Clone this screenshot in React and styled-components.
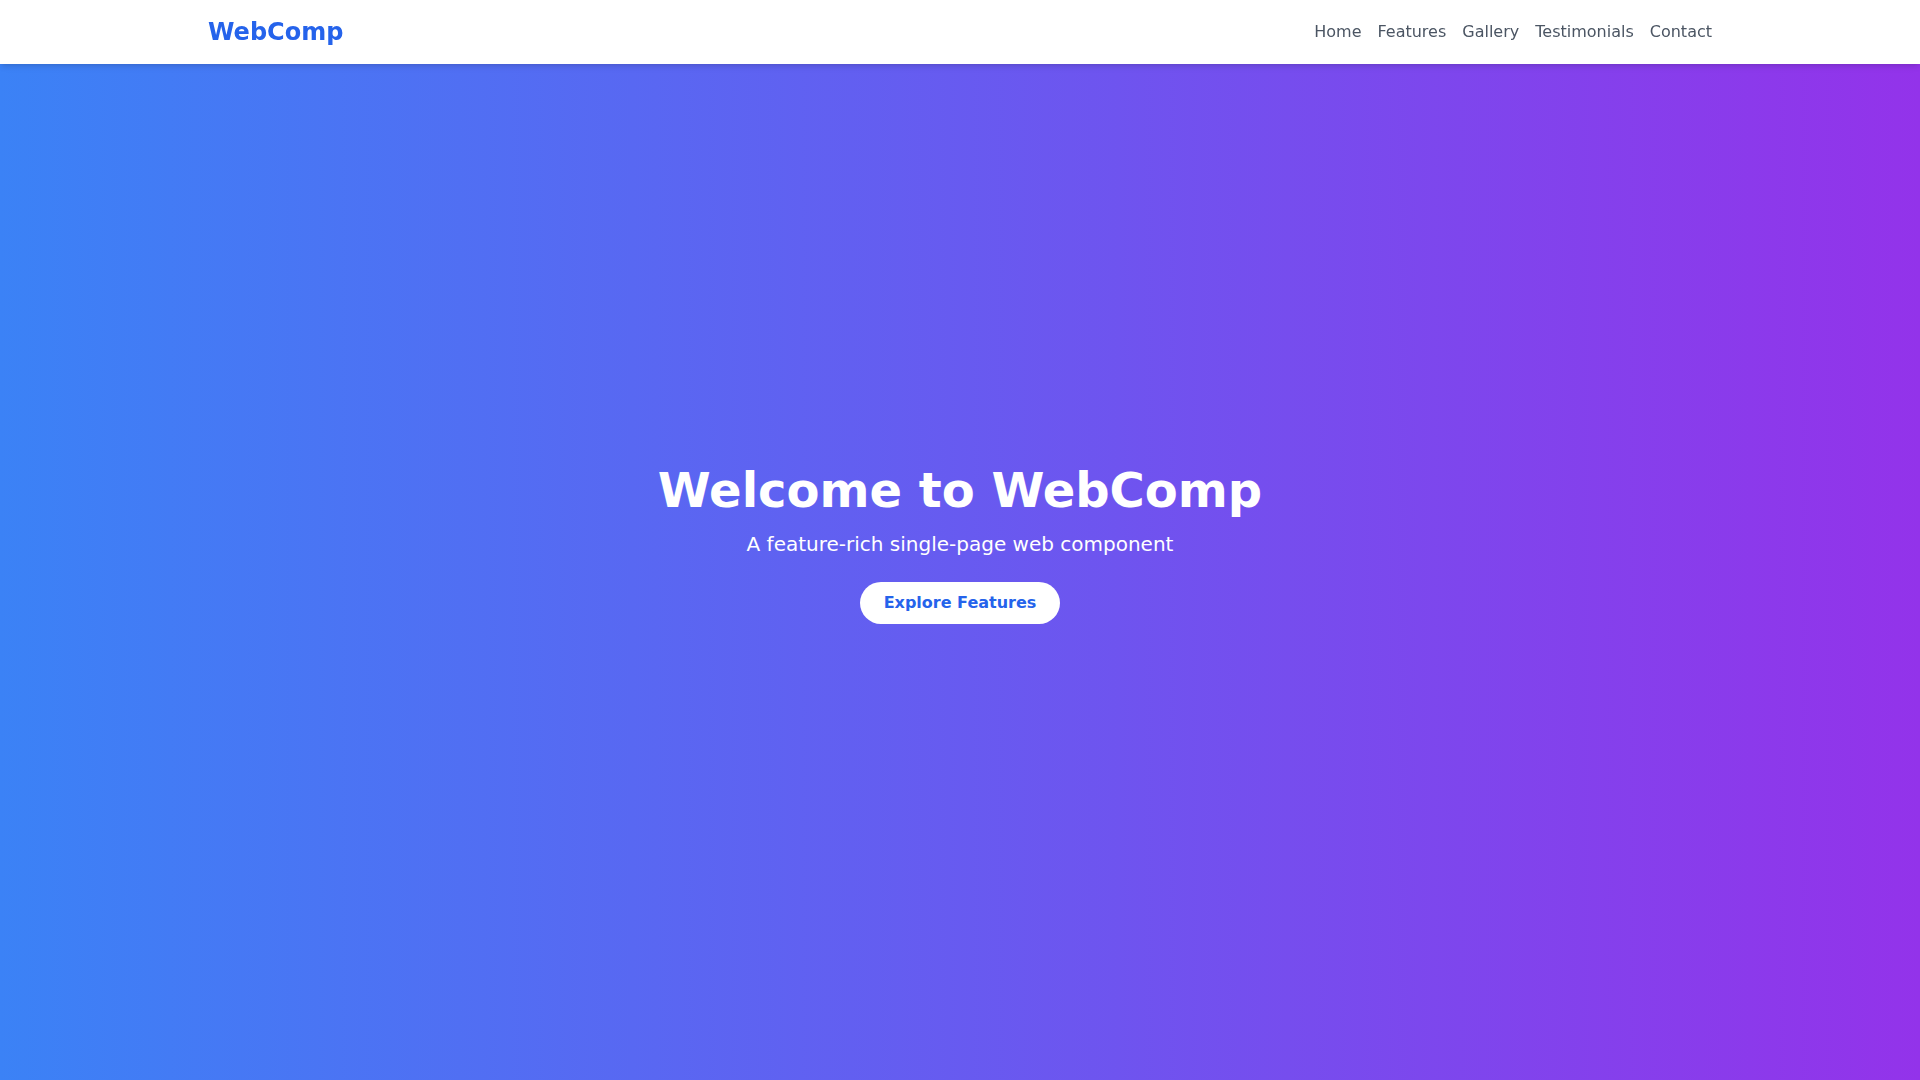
import React from 'react'
import styled, {createGlobalStyle} from 'styled-components'

const GlobalStyle = createGlobalStyle`
  *, *::before, *::after { box-sizing: border-box; }
  html, body { margin: 0; padding: 0; }
  body {
    font-family: "DejaVu Sans", "Liberation Sans", sans-serif;
    color: #1f2937;
  }
`

const Header = styled.header`
  position: fixed;
  top: 0;
  left: 0;
  right: 0;
  z-index: 10;
  height: 64px;
  background: #fff;
  box-shadow: 0 4px 6px -1px rgba(0, 0, 0, 0.1), 0 2px 4px -2px rgba(0, 0, 0, 0.1);
`

const Container = styled.div`
  max-width: 1536px;
  height: 100%;
  margin: 0 auto;
  padding: 0 16px;
  display: flex;
  align-items: center;
  justify-content: space-between;
`

const Logo = styled.a`
  font-size: 24px;
  line-height: 32px;
  font-weight: 700;
  color: #2563eb;
  text-decoration: none;
`

const Nav = styled.nav`
  display: flex;
  gap: 16px;
`

const NavLink = styled.a`
  font-size: 16px;
  line-height: 24px;
  color: #4b5563;
  text-decoration: none;
`

const Hero = styled.section`
  height: 100vh;
  display: flex;
  flex-direction: column;
  align-items: center;
  justify-content: center;
  text-align: center;
  color: #fff;
  padding-top: 10px;
  background: linear-gradient(to right, #3b82f6, #9333ea);
`

const Title = styled.h1`
  margin: 0 0 16px;
  font-size: 48px;
  line-height: 1;
  font-weight: 700;
`

const Subtitle = styled.p`
  margin: 0 0 24px;
  font-size: 20px;
  line-height: 28px;
`

const Button = styled.a`
  display: inline-block;
  padding: 9px 24px;
  border-radius: 9999px;
  background: #fff;
  color: #2563eb;
  font-size: 16px;
  line-height: 24px;
  font-weight: 700;
  text-decoration: none;
`

const links = ['Home', 'Features', 'Gallery', 'Testimonials', 'Contact']

const App = () => <>
  <GlobalStyle/>
  <Header>
    <Container>
      <Logo href="#">WebComp</Logo>
      <Nav>
        {links.map(l => <NavLink key={l} href={'#' + l.toLowerCase()}>{l}</NavLink>)}
      </Nav>
    </Container>
  </Header>
  <Hero id="home">
    <Title>Welcome to WebComp</Title>
    <Subtitle>A feature-rich single-page web component</Subtitle>
    <Button href="#features">Explore Features</Button>
  </Hero>
</>

export default App
